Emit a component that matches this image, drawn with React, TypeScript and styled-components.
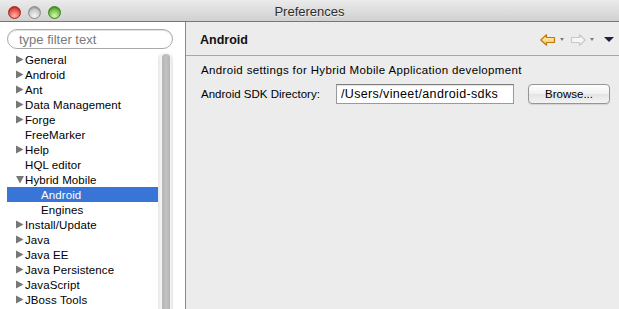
import React from "react";
import styled, { createGlobalStyle } from "styled-components";

const GlobalStyle = createGlobalStyle`
  html, body {
    margin: 0;
    padding: 0;
    overflow: hidden;
    background: #ededed;
  }
  body {
    font-family: "Liberation Sans", Arial, sans-serif;
  }
`;

type TreeNode = {
  label: string;
  arrow?: "closed" | "open";
  child?: boolean;
  selected?: boolean;
};

const tree: TreeNode[] = [
  { label: "General", arrow: "closed" },
  { label: "Android", arrow: "closed" },
  { label: "Ant", arrow: "closed" },
  { label: "Data Management", arrow: "closed" },
  { label: "Forge", arrow: "closed" },
  { label: "FreeMarker" },
  { label: "Help", arrow: "closed" },
  { label: "HQL editor" },
  { label: "Hybrid Mobile", arrow: "open" },
  { label: "Android", child: true, selected: true },
  { label: "Engines", child: true },
  { label: "Install/Update", arrow: "closed" },
  { label: "Java", arrow: "closed" },
  { label: "Java EE", arrow: "closed" },
  { label: "Java Persistence", arrow: "closed" },
  { label: "JavaScript", arrow: "closed" },
  { label: "JBoss Tools", arrow: "closed" },
];

export default function App() {
  return (
    <Window>
      <GlobalStyle />
      <TitleBar>
        <Lights>
          <Light color="red" />
          <Light color="gray" />
          <Light color="green" />
        </Lights>
        <Title>Preferences</Title>
      </TitleBar>
      <Body>
        <Sidebar>
          <FilterBox>
            <Filter placeholder="type filter text" />
          </FilterBox>
          <TreeArea>
            <TreeList>
              {tree.map((node, i) => (
                <TreeRow key={i} selected={node.selected} child={node.child}>
                  {node.arrow && (
                    <Arrow>
                      <svg width="8" height="9" viewBox="0 0 8 9">
                        {node.arrow === "closed" ? (
                          <polygon points="0,0.5 7.5,4.5 0,8.5" fill="#777" />
                        ) : (
                          <polygon points="0,1 8,1 4,8.5" fill="#777" />
                        )}
                      </svg>
                    </Arrow>
                  )}
                  {node.label}
                </TreeRow>
              ))}
            </TreeList>
            <ScrollTrack>
              <ScrollThumb />
            </ScrollTrack>
          </TreeArea>
        </Sidebar>
        <Main>
          <PageHeader>
            <PageTitle>Android</PageTitle>
            <NavIcons>
              <svg width="16" height="12" viewBox="0 0 16 12">
                <defs>
                  <linearGradient id="backFill" x1="0" y1="0" x2="0" y2="1">
                    <stop offset="0" stopColor="#fff6c8" />
                    <stop offset="1" stopColor="#f2c54a" />
                  </linearGradient>
                </defs>
                <path
                  d="M0.8 6 L6.5 0.8 L6.5 3.5 L14.5 3.5 L14.5 8.5 L6.5 8.5 L6.5 11.2 Z"
                  fill="url(#backFill)"
                  stroke="#c17a12"
                  strokeWidth="1.2"
                  strokeLinejoin="round"
                />
              </svg>
              <SmallDrop />
              <svg width="16" height="12" viewBox="0 0 16 12" style={{ marginLeft: 6 }}>
                <path
                  d="M15.2 6 L9.5 0.8 L9.5 3.5 L1.5 3.5 L1.5 8.5 L9.5 8.5 L9.5 11.2 Z"
                  fill="#f6f6f6"
                  stroke="#c9c9c9"
                  strokeWidth="1.2"
                  strokeLinejoin="round"
                />
              </svg>
              <SmallDrop />
              <MenuDrop />
            </NavIcons>
          </PageHeader>
          <Content>
            <Description>Android settings for Hybrid Mobile Application development</Description>
            <FormRow>
              <Label>Android SDK Directory:</Label>
              <PathInput defaultValue="/Users/vineet/android-sdks" />
              <Button>Browse...</Button>
            </FormRow>
          </Content>
        </Main>
      </Body>
    </Window>
  );
}

const Window = styled.div`
  width: 619px;
  height: 309px;
  display: flex;
  flex-direction: column;
  background: #ededed;
  color: #000;
  font-family: "Liberation Sans", Arial, sans-serif;
`;

const TitleBar = styled.div`
  position: relative;
  height: 21px;
  flex: none;
  display: flex;
  align-items: center;
  justify-content: center;
  background: linear-gradient(#ebebeb, #d0d0d0);
  border-bottom: 1px solid #777;
`;

const Lights = styled.div`
  position: absolute;
  left: 8px;
  top: 6px;
  display: flex;
  gap: 7px;
`;

const lightColors: Record<string, [string, string, string]> = {
  red: ["#ffb8ad", "#e4473c", "#a3241c"],
  gray: ["#f6f6f6", "#c4c4c4", "#8c8c8c"],
  green: ["#d8f7ae", "#68ba3c", "#3f7d21"],
};

const Light = styled.div<{ color: string }>`
  width: 13px;
  height: 13px;
  box-sizing: border-box;
  border-radius: 50%;
  border: 1px solid ${(p) => lightColors[p.color][2]};
  background: radial-gradient(
    circle at 50% 80%,
    ${(p) => lightColors[p.color][0]} 0%,
    ${(p) => lightColors[p.color][1]} 65%
  );
  box-shadow: inset 0 1px 1px rgba(0, 0, 0, 0.3);
`;

const Title = styled.div`
  font-size: 13px;
  color: #2e2e2e;
  text-shadow: 0 1px 0 rgba(255, 255, 255, 0.6);
  padding-top: 1px;
`;

const Body = styled.div`
  flex: 1;
  display: flex;
  min-height: 0;
`;

const Sidebar = styled.div`
  width: 185px;
  flex: none;
  background: #fff;
  border-right: 1px solid #8a8a8a;
  display: flex;
  flex-direction: column;
`;

const FilterBox = styled.div`
  padding: 7px 12px 0 7px;
  height: 23px;
`;

const Filter = styled.input`
  box-sizing: border-box;
  width: 166px;
  height: 20px;
  border: 1px solid #a9a9a9;
  border-radius: 10px;
  padding: 0 0 0 11px;
  font-family: "Liberation Sans", Arial, sans-serif;
  font-size: 13px;
  outline: none;
  box-shadow: inset 0 1px 1px rgba(0, 0, 0, 0.12);
  &::placeholder {
    color: #7a7a7a;
  }
`;

const TreeArea = styled.div`
  flex: 1;
  display: flex;
  padding-left: 7px;
  min-height: 0;
`;

const TreeList = styled.div`
  width: 151px;
`;

const TreeRow = styled.div<{ selected?: boolean; child?: boolean }>`
  height: 15px;
  display: flex;
  align-items: center;
  padding-left: ${(p) => (p.child ? 34 : 18)}px;
  position: relative;
  font-size: 11.5px;
  letter-spacing: 0.1px;
  white-space: nowrap;
  background: ${(p) => (p.selected ? "#3875d7" : "transparent")};
  color: ${(p) => (p.selected ? "#fff" : "#000")};
`;

const Arrow = styled.span`
  position: absolute;
  left: 9px;
  top: 3px;
  display: flex;
`;

const ScrollTrack = styled.div`
  width: 15px;
  background: linear-gradient(90deg, #e6e6e6, #f7f7f7 25%, #f7f7f7 75%, #e6e6e6);
  border-radius: 7px 7px 0 0;
  display: flex;
  justify-content: center;
  padding-top: 2px;
`;

const ScrollThumb = styled.div`
  width: 8px;
  height: 100%;
  border-radius: 4px 4px 0 0;
  background: linear-gradient(90deg, #b4b4b4, #c2c2c2 50%, #b4b4b4);
`;

const Main = styled.div`
  flex: 1;
  display: flex;
  flex-direction: column;
  background: #ececec;
`;

const PageHeader = styled.div`
  height: 34px;
  box-sizing: border-box;
  border-bottom: 1px solid #a6a6a6;
  display: flex;
  align-items: center;
  justify-content: space-between;
  padding: 0 11px 0 14px;
`;

const PageTitle = styled.div`
  font-size: 12.5px;
  font-weight: bold;
  color: #111;
  padding-top: 2px;
`;

const NavIcons = styled.div`
  display: flex;
  align-items: center;
  padding-top: 2px;
`;

const SmallDrop = styled.span`
  width: 0;
  height: 0;
  margin-left: 4px;
  border-left: 2.5px solid transparent;
  border-right: 2.5px solid transparent;
  border-top: 3px solid #7a7a7a;
`;

const MenuDrop = styled.span`
  width: 0;
  height: 0;
  margin-left: 10px;
  border-left: 5px solid transparent;
  border-right: 5px solid transparent;
  border-top: 5px solid #241d4a;
`;

const Content = styled.div`
  padding: 7px 15px 0 15px;
  display: flex;
  flex-direction: column;
`;

const Description = styled.div`
  font-size: 11.5px;
  letter-spacing: 0.35px;
  height: 15px;
  line-height: 15px;
`;

const FormRow = styled.div`
  display: flex;
  align-items: center;
  margin-top: 6px;
`;

const Label = styled.div`
  font-size: 11.5px;
  width: 135px;
`;

const PathInput = styled.input`
  box-sizing: border-box;
  width: 178px;
  height: 20px;
  border: 1px solid #9a9a9a;
  border-top-color: #7d7d7d;
  padding: 0 0 0 4px;
  font-family: "Liberation Sans", Arial, sans-serif;
  font-size: 12.5px;
  letter-spacing: 0.35px;
  color: #000;
  background: #fff;
  outline: none;
  box-shadow: inset 0 1px 1px rgba(0, 0, 0, 0.12);
`;

const Button = styled.button`
  box-sizing: border-box;
  margin-left: 14px;
  width: 82px;
  height: 20px;
  border: 1px solid #959595;
  border-radius: 4px;
  background: linear-gradient(#ffffff, #f0f0f0 50%, #e4e4e4 51%, #f3f3f3);
  font-family: "Liberation Sans", Arial, sans-serif;
  font-size: 11.5px;
  color: #000;
  padding: 0;
  box-shadow: 0 1px 1px rgba(0, 0, 0, 0.1);
`;
